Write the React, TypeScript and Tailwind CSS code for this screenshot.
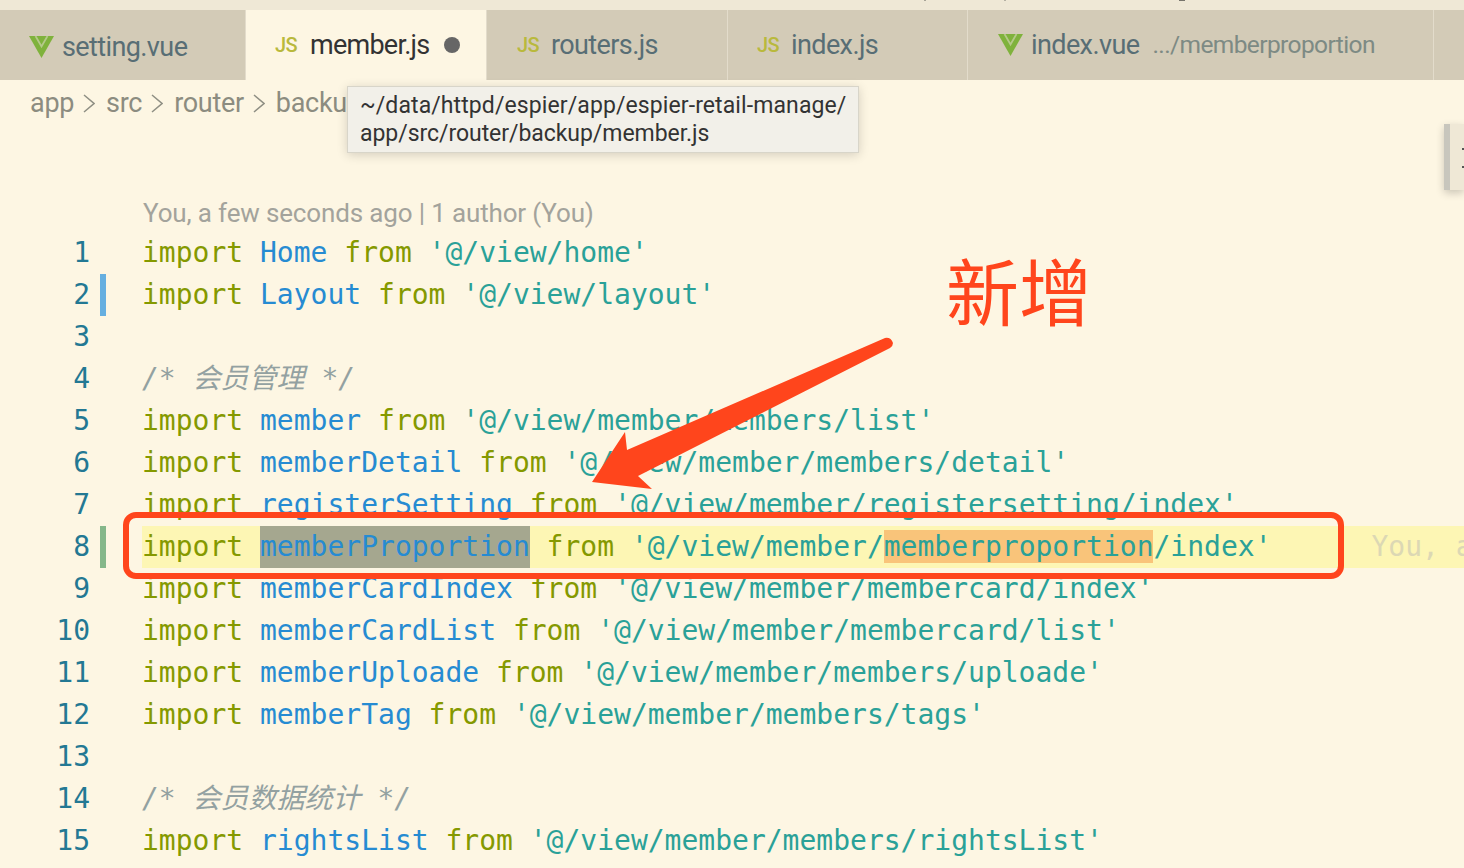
const mono = "font-['DejaVu_Sans_Mono','Noto_Sans_CJK_SC',monospace]";

function VueIcon() {
  return (
    <svg width="25" height="22" viewBox="0 0 25 22" className="shrink-0">
      <path d="M0 0h25L12.500 22z" fill="#7fb23c" />
      <path d="M6.500 0l6 10.500L18.500 0" fill="none" stroke="#b5c98a" strokeWidth="1.800" />
    </svg>
  );
}

function JsIcon() {
  return <span className="w-[22px] shrink-0 text-[20px] leading-none font-medium tracking-[-0.5px] text-[#b9b93c] font-['Roboto',sans-serif]">JS</span>;
}

function Chevron() {
  return (
    <svg width="12" height="19" viewBox="0 0 12 19" className="ml-[9px] mr-[11px] shrink-0">
      <path d="M1 1l10 8.500L1 18" fill="none" stroke="#8f8f84" strokeWidth="1.500" />
    </svg>
  );
}

function Tab({ className, children }: { className: string; children: React.ReactNode }) {
  return <div className={`flex h-full items-center shrink-0 ${className}`}>{children}</div>;
}

type Row = { name?: string; path?: string; comment?: string; marker?: string };

const rows: Row[] = [
  { name: 'Home', path: "'@/view/home'" },
  { name: 'Layout', path: "'@/view/layout'", marker: 'bg-[#66afe0]' },
  {},
  { comment: '/* 会员管理 */' },
  { name: 'member', path: "'@/view/member/members/list'" },
  { name: 'memberDetail', path: "'@/view/member/members/detail'" },
  { name: 'registerSetting', path: "'@/view/member/registersetting/index'" },
  { name: 'memberProportion', marker: 'bg-[#85b78a]' },
  { name: 'memberCardIndex', path: "'@/view/member/membercard/index'" },
  { name: 'memberCardList', path: "'@/view/member/membercard/list'" },
  { name: 'memberUploade', path: "'@/view/member/members/uploade'" },
  { name: 'memberTag', path: "'@/view/member/members/tags'" },
  {},
  { comment: '/* 会员数据统计 */' },
  { name: 'rightsList', path: "'@/view/member/members/rightsList'" },
];

function CodeRow({ row, n }: { row: Row; n: number }) {
  const active = n === 8;
  return (
    <div className={`flex h-[42px] items-center whitespace-pre text-[28px] leading-[42px] ${mono}`}>
      <div className="w-[90px] shrink-0 text-right text-[#237893]">{n}</div>
      <div className={`ml-[10px] h-full w-[6px] shrink-0 ${row.marker ?? ''}`} />
      <div className={`ml-[36px] flex h-full min-w-0 flex-1 overflow-hidden ${active ? 'bg-[#fdf6b4]' : ''}`}>
        {row.comment && <span className="text-[#93a1a1] italic">{row.comment}</span>}
        {row.name && (
          <>
            <span className="text-[#859900]">import </span>
            <span className={`text-[#268bd2] ${active ? 'bg-[#a5a78f]' : ''}`}>{row.name}</span>
            <span className="text-[#859900]"> from </span>
            {active ? (
              <span className="text-[#2aa198]">
                {"'@/view/member/"}
                <span className="bg-[#f9c47a]">memberproportion</span>
                {"/index'"}
                <span className="ml-[100px] text-[#dcd8b4]">You, a</span>
              </span>
            ) : (
              <span className="text-[#2aa198]">{row.path}</span>
            )}
          </>
        )}
      </div>
    </div>
  );
}

export default function App() {
  return (
    <div className="relative h-[868px] w-[1464px] overflow-hidden bg-[#fdf6e3] font-['Roboto',sans-serif]">
      <div className="h-[10px] bg-[#efe8d6]" />

      <div className="flex h-[70px] gap-px bg-[#e3dccb] text-[27px] tracking-[-0.6px] text-[#586e75]">
        <Tab className="w-[245px] bg-[#d3cbb7] pl-[29px] pt-[3px]">
          <VueIcon />
          <span className="ml-[8px] pt-[2px]">setting.vue</span>
        </Tab>
        <Tab className="w-[240px] bg-[#fdf6e3] pl-[29px] text-[#333333]">
          <JsIcon />
          <span className="ml-[13px] tracking-[-0.75px]">member.js</span>
          <span className="ml-[15px] h-[16px] w-[16px] rounded-full bg-[#666666]" />
        </Tab>
        <Tab className="w-[240px] bg-[#d3cbb7] pl-[30px]">
          <JsIcon />
          <span className="ml-[12px]">routers.js</span>
        </Tab>
        <Tab className="w-[239px] bg-[#d3cbb7] pl-[29px]">
          <JsIcon />
          <span className="ml-[12px]">index.js</span>
        </Tab>
        <Tab className="w-[465px] bg-[#d3cbb7] pl-[30px]">
          <VueIcon />
          <span className="ml-[8px]">index.vue</span>
          <span className="ml-[13px] text-[24.5px] tracking-[-0.6px] text-[#7d8a84]">.../memberproportion</span>
        </Tab>
        <div className="flex-1 bg-[#d3cbb7]" />
      </div>

      <div className="flex h-[47px] items-center pl-[30px] text-[27px] tracking-[-0.3px] text-[#8c8c80]">
        <span>app</span>
        <Chevron />
        <span>src</span>
        <Chevron />
        <span>router</span>
        <Chevron />
        <span>backup</span>
      </div>

      <div className="flex h-[105px] items-end pb-[1px] pl-[143px] text-[26px] leading-[36px] tracking-[-0.15px] text-[#a3a39c]">
        You, a few seconds ago | 1 author (You)
      </div>

      {rows.map((row, i) => (
        <CodeRow key={i} row={row} n={i + 1} />
      ))}

      {/* cut off bits of the window title */}
      <div className="absolute left-[924px] top-0 h-px w-[2px] bg-[#a8a498]" />
      <div className="absolute left-[1004px] top-0 h-px w-[2px] bg-[#b5b1a4]" />
      <div className="absolute left-[1179px] top-0 h-[1px] w-[6px] bg-[#77746c]" />

      {/* hover tooltip */}
      <div className="absolute left-[347px] top-[86px] h-[67px] w-[512px] border border-[#d8d5c9] bg-[#f2f0e9] pl-[12px] pt-[5px] text-[23px] leading-[28px] tracking-[0.1px] text-[#333333] shadow-[0_2px_10px_rgba(0,0,0,0.16)]">
        <div>~/data/httpd/espier/app/espier-retail-manage/</div>
        <div className="tracking-[-0.05px]">app/src/router/backup/member.js</div>
      </div>

      {/* scrollbar widget */}
      <div className="absolute left-[1444px] top-[124px] h-[66px] w-[20px] border-l-[6px] border-[#c8c6bd] bg-[#efe8d6] shadow-[0_3px_8px_rgba(0,0,0,0.2)]">
        <div className="absolute left-[12px] top-[24px] h-[2px] w-[2px] bg-[#555555]" />
        <div className="absolute left-[12px] top-[42px] h-[2px] w-[2px] bg-[#555555]" />
      </div>

      {/* annotations */}
      <div className="absolute left-[123px] top-[512px] h-[67px] w-[1221px] rounded-[13px] border-[6px] border-[#ff451c]" />
      <svg className="absolute left-0 top-0" width="1464" height="868">
        <path d="M885 338Q891 337 893 343Q893 346 890 348L638 476L652 489L592 482L625 432L627 450Z" fill="#ff451c" />
      </svg>
      <div className="absolute left-[946px] top-[242px] text-[73px] leading-[92px] font-normal text-[#ff451c] font-['Noto_Sans_CJK_SC',sans-serif]">
        新增
      </div>
    </div>
  );
}
